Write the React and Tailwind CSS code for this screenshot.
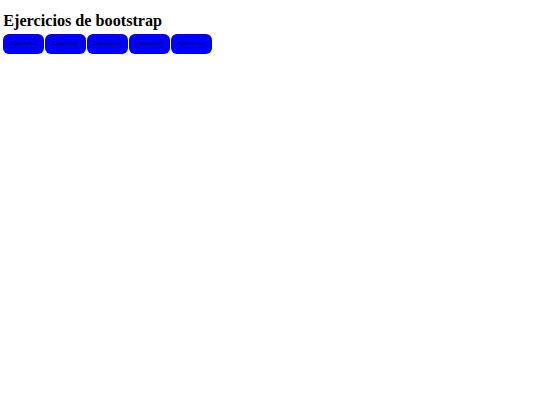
const items = ["Ejercicio1", "Ejercicio2", "Ejercicio3", "Ejercicio4", "Ejercicio5"];

export default function App() {
  return (
    <div className="min-h-[405px] bg-white px-[3.25px] pt-[11.5px] font-['Liberation_Serif',serif] text-black">
      <h1 className="text-[16.2px] leading-[19px] font-bold">Ejercicios de bootstrap</h1>
      <div className="mt-[3px] flex gap-[1.5px]">
        {items.map((t) => (
          <a
            key={t}
            href="#"
            className="flex h-[20px] w-[40.5px] items-center justify-center rounded-[6px] bg-[#0000ff] text-[6.75px] text-[#000060] underline decoration-[#0000a0] decoration-[0.5px] underline-offset-[1.5px]"
          >
            {t}
          </a>
        ))}
      </div>
    </div>
  );
}
